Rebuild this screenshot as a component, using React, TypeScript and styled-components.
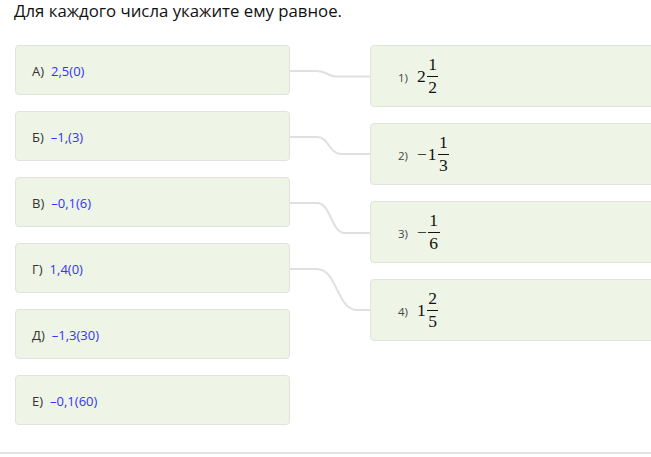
import React from "react";
import styled, { createGlobalStyle } from "styled-components";

const GlobalStyle = createGlobalStyle`
  html, body {
    margin: 0;
    padding: 0;
    background: #ffffff;
    overflow: hidden;
  }
  body {
    font-family: "Open Sans", "Noto Sans", sans-serif;
    color: #333333;
  }
`;

const Page = styled.div`
  width: 700px;
`;

const Title = styled.h1`
  margin: 0 0 23px 14px;
  font-size: 16.8px;
  line-height: 22px;
  font-weight: 500;
  color: #111111;
`;

const Board = styled.div`
  display: grid;
  grid-template-columns: 275px 80px 300px;
  margin-left: 15px;
  align-items: start;
`;

const Column = styled.div`
  display: flex;
  flex-direction: column;
  gap: 16px;
`;

const Card = styled.div<{ $tall?: boolean }>`
  box-sizing: border-box;
  height: ${(p) => (p.$tall ? "62px" : "50px")};
  display: flex;
  align-items: center;
  padding: ${(p) => (p.$tall ? "2px 0 0 27px" : "1px 0 0 16px")};
  background: #eef4e6;
  border: 1px solid #e1e4dd;
  border-radius: 4px;
`;

const Label = styled.span`
  font-size: 13px;
  color: #333333;
`;

const Value = styled.span`
  font-size: 13px;
  color: #3333ff;
  margin-left: 7px;
`;

const SmallLabel = styled.span`
  font-size: 11.5px;
  color: #444444;
  margin-right: 9px;
`;

const Math = styled.span`
  display: inline-flex;
  align-items: center;
  font-family: "Liberation Serif", "Times New Roman", serif;
  font-size: 17.5px;
  line-height: 1;
  color: #111111;
`;

const Whole = styled.span`
  display: inline-block;
  margin-right: 1px;
`;

const Frac = styled.span`
  display: inline-flex;
  flex-direction: column;
  align-items: stretch;
  text-align: center;
  margin-top: -2px;
`;

const Num = styled.span`
  padding: 0 1.5px 3px;
  border-bottom: 1px solid #111111;
`;

const Den = styled.span`
  padding: 2px 1.5px 0;
`;

const Wires = styled.svg`
  display: block;
  width: 80px;
  height: 380px;
`;

const BottomRule = styled.div`
  margin-top: 27px;
  height: 2px;
  background: #e3e3e3;
`;

const left = [
  { l: "А)", v: "2,5(0)" },
  { l: "Б)", v: "–1,(3)" },
  { l: "В)", v: "–0,1(6)" },
  { l: "Г)", v: "1,4(0)" },
  { l: "Д)", v: "–1,3(30)" },
  { l: "Е)", v: "–0,1(60)" },
];

const right = [
  { l: "1)", sign: "", whole: "2", n: "1", d: "2" },
  { l: "2)", sign: "−", whole: "1", n: "1", d: "3" },
  { l: "3)", sign: "−", whole: "", n: "1", d: "6" },
  { l: "4)", sign: "", whole: "1", n: "2", d: "5" },
];

const links: [number, number, number][] = [
  [26, 31.5, 20],
  [92, 109, 24],
  [158, 188, 28],
  [224, 265, 40],
];

function wire(y1: number, y2: number, w: number) {
  const x0 = 27;
  const x1 = x0 + w;
  const cx = x0 + w / 2;
  return `M0 ${y1} H${x0} C${cx} ${y1} ${cx} ${y2} ${x1} ${y2} H80`;
}

export default function App() {
  return (
    <Page>
      <GlobalStyle />
      <Title>Для каждого числа укажите ему равное.</Title>
      <Board>
        <Column>
          {left.map((it) => (
            <Card key={it.l}>
              <Label>{it.l}</Label>
              <Value>{it.v}</Value>
            </Card>
          ))}
        </Column>
        <Wires viewBox="0 0 80 380">
          {links.map(([a, b, w], i) => (
            <path
              key={i}
              d={wire(a, b, w)}
              fill="none"
              stroke="#e0e0e0"
              strokeWidth={2}
            />
          ))}
        </Wires>
        <Column>
          {right.map((it) => (
            <Card $tall key={it.l}>
              <SmallLabel>{it.l}</SmallLabel>
              <Math>
                {it.sign && <Whole>{it.sign}</Whole>}
                {it.whole && <Whole>{it.whole}</Whole>}
                <Frac>
                  <Num>{it.n}</Num>
                  <Den>{it.d}</Den>
                </Frac>
              </Math>
            </Card>
          ))}
        </Column>
      </Board>
      <BottomRule />
    </Page>
  );
}
